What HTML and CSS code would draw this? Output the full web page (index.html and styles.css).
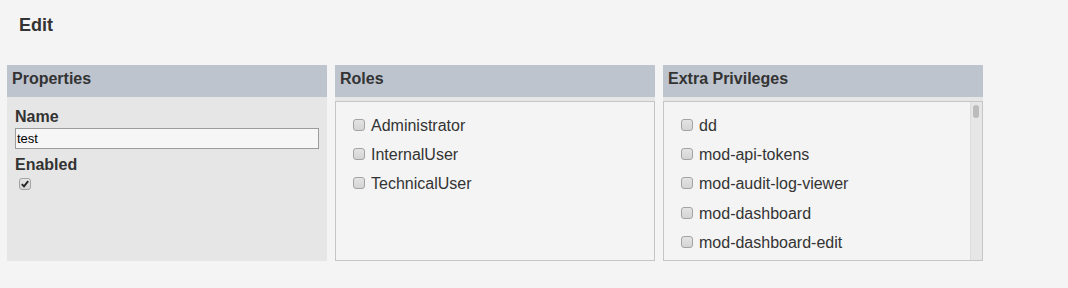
FILE: index.html
```html
<!DOCTYPE html>
<html>
<head>
<meta charset="utf-8">
<title>Edit</title>
<link rel="stylesheet" href="styles.css">
</head>
<body>
<h1 class="title">Edit</h1>
<div class="panels">
  <section class="panel">
    <div class="panel-head">Properties</div>
    <div class="panel-body props">
      <label class="field-label" for="name">Name</label>
      <input class="text-input" id="name" type="text" value="test">
      <div class="field-label enabled-label">Enabled</div>
      <input class="check enabled-check" type="checkbox" checked>
    </div>
  </section>
  <section class="panel">
    <div class="panel-head">Roles</div>
    <div class="panel-body">
      <div class="list-box">
        <div class="list">
          <label class="item"><input class="check" type="checkbox">Administrator</label>
          <label class="item"><input class="check" type="checkbox">InternalUser</label>
          <label class="item"><input class="check" type="checkbox">TechnicalUser</label>
        </div>
      </div>
    </div>
  </section>
  <section class="panel">
    <div class="panel-head">Extra Privileges</div>
    <div class="panel-body">
      <div class="list-box">
        <div class="list clip">
          <label class="item"><input class="check" type="checkbox">dd</label>
          <label class="item"><input class="check" type="checkbox">mod-api-tokens</label>
          <label class="item"><input class="check" type="checkbox">mod-audit-log-viewer</label>
          <label class="item"><input class="check" type="checkbox">mod-dashboard</label>
          <label class="item"><input class="check" type="checkbox">mod-dashboard-edit</label>
        </div>
        <div class="scrollbar"><div class="scroll-thumb"></div></div>
      </div>
    </div>
  </section>
</div>
</body>
</html>
```
FILE: styles.css
```css
html, body {
  margin: 0;
  padding: 0;
  background: #f4f4f4;
}

body {
  font-family: "Liberation Sans", Arial, sans-serif;
  color: #333;
}

.title {
  margin: 15px 0 0 19px;
  font-size: 18px;
  line-height: 20px;
  font-weight: bold;
}

.panels {
  display: flex;
  gap: 8px;
  margin-top: 30px;
  padding-left: 7px;
}

.panel {
  width: 320px;
  display: flex;
  flex-direction: column;
}

.panel-head {
  box-sizing: border-box;
  height: 32px;
  padding: 3px 5px 0;
  line-height: 21px;
  font-size: 16px;
  font-weight: bold;
  background: #bec4ce;
  color: #333;
}

.panel-body {
  box-sizing: border-box;
  height: 164px;
  padding-top: 4px;
  background: #e6e6e6;
}

.panel-body.props {
  padding: 11px 8px 0;
}

.field-label {
  display: block;
  font-size: 16px;
  font-weight: bold;
  line-height: 18px;
}

.text-input {
  display: block;
  box-sizing: border-box;
  width: 304px;
  height: 21px;
  margin: 2px 0 0;
  padding: 0 1px;
  border: 1px solid #9c9c9c;
  background: #f6f6f6;
  font-family: "Liberation Sans", Arial, sans-serif;
  font-size: 13px;
  color: #000;
  outline: none;
}

.enabled-label {
  margin-top: 7px;
}

.check {
  appearance: none;
  -webkit-appearance: none;
  box-sizing: border-box;
  width: 12px;
  height: 12px;
  margin: 0 6px 0 0;
  border: 1px solid #a3a3a3;
  border-radius: 3px;
  background: linear-gradient(#e4e4e4, #d4d4d4);
  vertical-align: baseline;
}

.check:checked {
  background-image: url("data:image/svg+xml,%3Csvg xmlns='http://www.w3.org/2000/svg' viewBox='0 0 10 10'%3E%3Cpath d='M1.8 5.2 L4 7.4 L8.2 2.2' fill='none' stroke='%23222' stroke-width='1.9'/%3E%3C/svg%3E"), linear-gradient(#e4e4e4, #d4d4d4);
  background-size: 10px 10px, auto;
  background-position: center, center;
  background-repeat: no-repeat;
}

.enabled-check {
  display: block;
  margin: 4px 0 0 4px;
}

.list-box {
  box-sizing: border-box;
  height: 160px;
  display: flex;
  border: 1px solid #c6c6c6;
  background: #f4f4f4;
  font-size: 16px;
}

.list {
  flex: 1;
  padding: 15px 0 0 17px;
}

.list.clip {
  overflow: hidden;
}

.item {
  display: block;
  margin-bottom: 11.2px;
  white-space: nowrap;
}

.scrollbar {
  box-sizing: border-box;
  width: 12px;
  padding: 3px 0 0 2px;
  background: #e6e6e6;
  border-left: 1px solid #dcdcdc;
}

.scroll-thumb {
  width: 6px;
  height: 13px;
  border-radius: 3px;
  background: #bcbcbc;
}
```
